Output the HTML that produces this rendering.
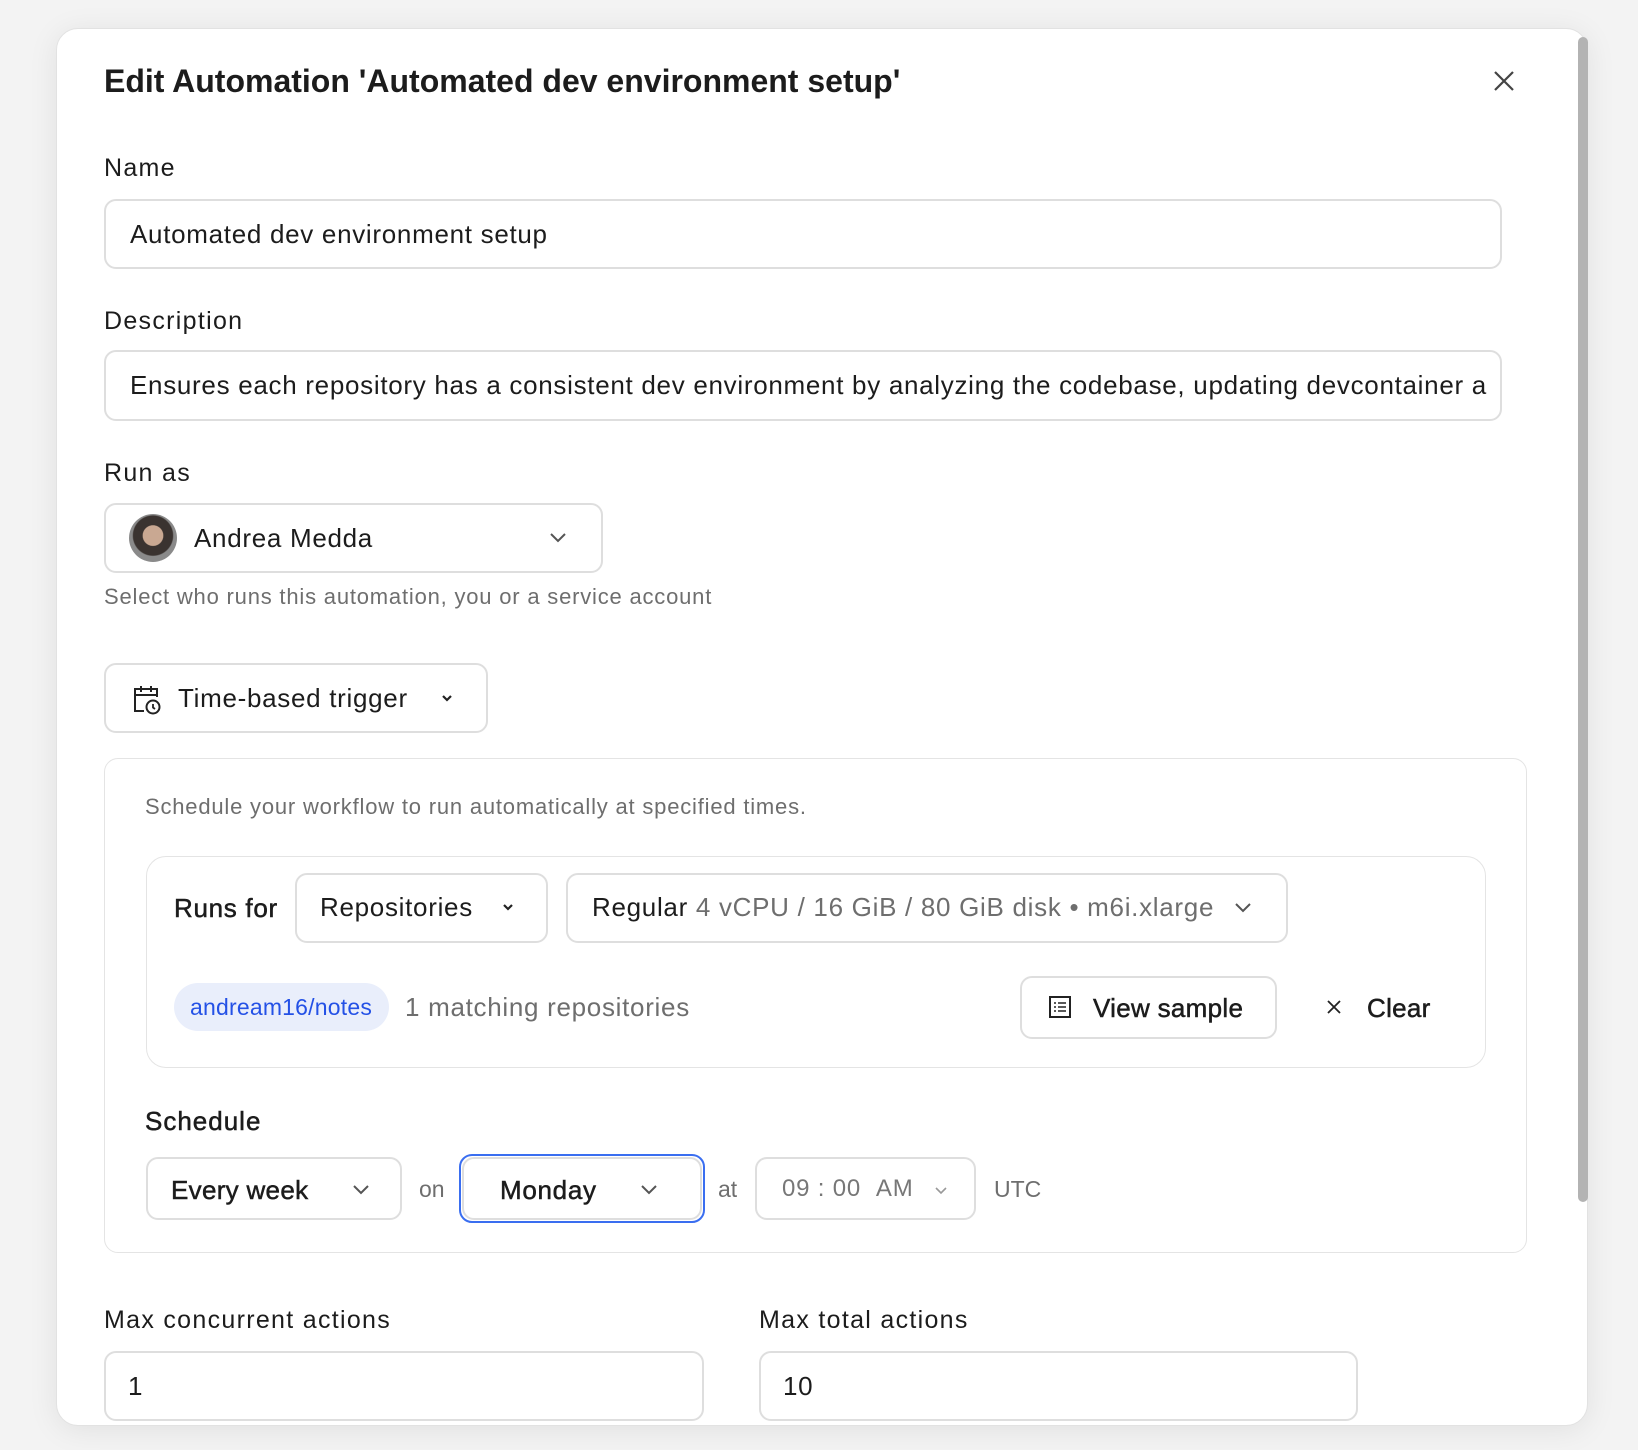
<!DOCTYPE html>
<html><head><meta charset="utf-8"><style>
*{box-sizing:border-box;margin:0;padding:0}
body{width:1638px;height:1450px;background:#f3f3f3;font-family:"Liberation Sans",sans-serif;color:#1c1c1c;position:relative;overflow:hidden}
.modal{position:absolute;left:56px;top:28px;width:1532px;height:1398px;background:#fff;border:1px solid #e2e2e2;border-radius:22px;box-shadow:0 4px 30px rgba(0,0,0,.08);overflow:hidden}
.a{position:absolute;white-space:nowrap}
.box{position:absolute;border:2px solid #dedede;border-radius:12px;background:#fff}
.lbl{font-size:25px;color:#1c1c1c;letter-spacing:1.3px}
.t{font-size:26px;letter-spacing:.7px}
.med{-webkit-text-stroke:.5px #1c1c1c}
.gray{color:#6e6e6e}
.sm{font-size:22px;letter-spacing:.8px}
</style></head><body>
<div class="modal"></div>
<div class="a" style="left:1578px;top:37px;width:10px;height:1165px;background:#b3b3b3;border-radius:5px"></div>

<div class="a" style="left:104px;top:63px;font-size:32px;font-weight:bold;letter-spacing:0px">Edit Automation 'Automated dev environment setup'</div>
<svg class="a" style="left:1493px;top:70px" width="22" height="22" viewBox="0 0 22 22"><path d="M2 2L20 20M20 2L2 20" stroke="#444" stroke-width="2.2"/></svg>

<div class="a lbl" style="left:104px;top:154px">Name</div>
<div class="box" style="left:104px;top:199px;width:1398px;height:70px"></div>
<div class="a t" style="left:130px;top:219px">Automated dev environment setup</div>

<div class="a lbl" style="left:104px;top:307px">Description</div>
<div class="box" style="left:104px;top:350px;width:1398px;height:71px;overflow:hidden"><div class="a t" style="left:24px;top:18px">Ensures each repository has a consistent dev environment by analyzing the codebase, updating devcontainer a</div></div>

<div class="a lbl" style="left:104px;top:459px">Run as</div>
<div class="box" style="left:104px;top:503px;width:499px;height:70px"></div>
<div class="a" style="left:129px;top:514px;width:48px;height:48px;border-radius:50%;background:radial-gradient(circle at 50% 45%,#c9a892 0 28%,#3a3330 30% 55%,#8a8a8a 58%)"></div>
<div class="a t" style="left:194px;top:523px">Andrea Medda</div>
<svg class="a" style="left:549px;top:531px" width="18" height="12" viewBox="0 0 18 12"><path d="M2 3l7 7 7-7" fill="none" stroke="#555" stroke-width="2"/></svg>
<div class="a gray sm" style="left:104px;top:584px">Select who runs this automation, you or a service account</div>

<div class="box" style="left:104px;top:663px;width:384px;height:70px"></div>
<svg class="a" style="left:132px;top:683px" width="30" height="32" viewBox="0 0 30 32"><path d="M12 28H3V6h22v8M3 12h22M9 3v6M19 3v6" fill="none" stroke="#222" stroke-width="2"/><circle cx="21" cy="24" r="6.5" fill="#fff" stroke="#222" stroke-width="2"/><path d="M21 21v3.5l2 1.5" fill="none" stroke="#222" stroke-width="1.8"/></svg>
<div class="a t" style="left:178px;top:683px">Time-based trigger</div>
<svg class="a" style="left:441px;top:694px" width="12" height="9" viewBox="0 0 12 9"><path d="M2 2l4 4 4-4" fill="none" stroke="#222" stroke-width="2.2"/></svg>

<div class="box" style="left:104px;top:758px;width:1423px;height:495px;border-width:1.5px;border-color:#e4e4e4;border-radius:14px"></div>
<div class="a gray sm" style="left:145px;top:794px">Schedule your workflow to run automatically at specified times.</div>

<div class="box" style="left:146px;top:856px;width:1340px;height:212px;border-width:1.5px;border-color:#e4e4e4;border-radius:20px"></div>
<div class="a t med" style="left:174px;top:893px">Runs for</div>
<div class="box" style="left:295px;top:873px;width:253px;height:70px"></div>
<div class="a t" style="left:320px;top:892px">Repositories</div>
<svg class="a" style="left:502px;top:903px" width="12" height="9" viewBox="0 0 12 9"><path d="M2 2l4 4 4-4" fill="none" stroke="#222" stroke-width="2.2"/></svg>
<div class="box" style="left:566px;top:873px;width:722px;height:70px"></div>
<div class="a t" style="left:592px;top:892px">Regular <span class="gray">4 vCPU / 16 GiB / 80 GiB disk • m6i.xlarge</span></div>
<svg class="a" style="left:1234px;top:901px" width="18" height="12" viewBox="0 0 18 12"><path d="M2 3l7 7 7-7" fill="none" stroke="#555" stroke-width="2"/></svg>

<div class="a" style="left:174px;top:983px;width:215px;height:48px;border-radius:24px;background:#e9eefb"></div>
<div class="a" style="left:190px;top:994px;font-size:23px;color:#2451e6;letter-spacing:.2px">andream16/notes</div>
<div class="a t gray" style="left:405px;top:992px">1 matching repositories</div>
<div class="box" style="left:1020px;top:976px;width:257px;height:63px"></div>
<svg class="a" style="left:1048px;top:995px" width="24" height="24" viewBox="0 0 24 24"><rect x="2" y="2" width="20" height="20" fill="none" stroke="#222" stroke-width="2"/><path d="M6 8h2M6 12h2M6 16h2M10 8h8M10 12h8M10 16h8" stroke="#222" stroke-width="1.6"/></svg>
<div class="a t med" style="left:1093px;top:993px;letter-spacing:.3px">View sample</div>
<svg class="a" style="left:1326px;top:999px" width="16" height="16" viewBox="0 0 16 16"><path d="M2 2l12 12M14 2L2 14" stroke="#222" stroke-width="1.8"/></svg>
<div class="a t med" style="left:1367px;top:993px;letter-spacing:.3px">Clear</div>

<div class="a t med" style="left:145px;top:1106px;letter-spacing:1px">Schedule</div>
<div class="box" style="left:146px;top:1157px;width:256px;height:63px"></div>
<div class="a t med" style="left:171px;top:1175px;letter-spacing:.3px">Every week</div>
<svg class="a" style="left:352px;top:1183px" width="18" height="12" viewBox="0 0 18 12"><path d="M2 3l7 7 7-7" fill="none" stroke="#555" stroke-width="2"/></svg>
<div class="a gray" style="left:419px;top:1176px;font-size:23px">on</div>
<div class="a" style="left:459px;top:1154px;width:246px;height:69px;border:2px solid #3a6ef0;border-radius:13px"></div>
<div class="box" style="left:462px;top:1157px;width:240px;height:63px"></div>
<div class="a t med" style="left:500px;top:1175px">Monday</div>
<svg class="a" style="left:640px;top:1183px" width="18" height="12" viewBox="0 0 18 12"><path d="M2 3l7 7 7-7" fill="none" stroke="#555" stroke-width="2"/></svg>
<div class="a gray" style="left:718px;top:1176px;font-size:23px">at</div>
<div class="box" style="left:755px;top:1157px;width:221px;height:63px"></div>
<div class="a gray" style="left:782px;top:1175px;font-size:24px;color:#777;letter-spacing:.8px">09 : 00 &nbsp;AM</div>
<svg class="a" style="left:934px;top:1186px" width="14" height="10" viewBox="0 0 14 10"><path d="M2 2l5 5 5-5" fill="none" stroke="#999" stroke-width="1.6"/></svg>
<div class="a gray" style="left:994px;top:1176px;font-size:23px">UTC</div>

<div class="a lbl" style="left:104px;top:1306px">Max concurrent actions</div>
<div class="box" style="left:104px;top:1351px;width:600px;height:70px"></div>
<div class="a t" style="left:128px;top:1371px">1</div>
<div class="a lbl" style="left:759px;top:1306px">Max total actions</div>
<div class="box" style="left:759px;top:1351px;width:599px;height:70px"></div>
<div class="a t" style="left:783px;top:1371px">10</div>
</body></html>
